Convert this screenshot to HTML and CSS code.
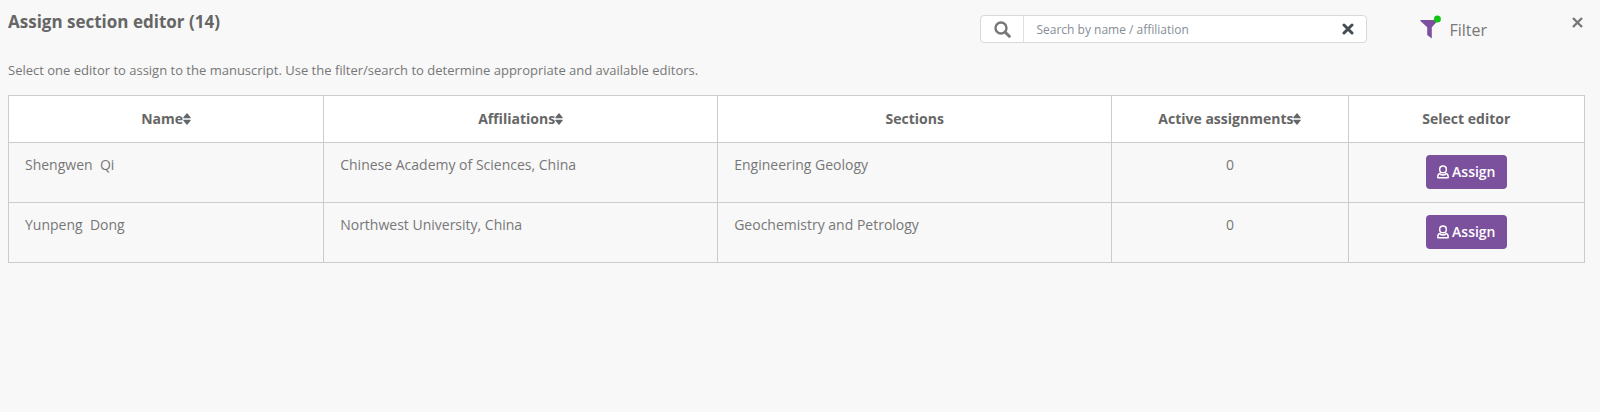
FILE: index.html
```
<!DOCTYPE html>
<html lang="en">

<head>
    <meta charset="UTF-8">
    <meta name="viewport" content="width=device-width, initial-scale=1.0">
    <link rel="stylesheet" href="styles.css">
    <title>Assign section editor</title>
</head>

<body>
    <!-- icons -->
    <svg class="sprite" aria-hidden="true">
        <symbol id="sort" viewBox="0 0 8 12">
            <path d="M0.6 5.2 Q0 5.2 0.3 4.5 L3.5 0.6 Q4 0.1 4.5 0.6 L7.7 4.5 Q8 5.2 7.4 5.2Z M0.6 6.8 Q0 6.8 0.3 7.5 L3.5 11.4 Q4 11.9 4.5 11.4 L7.7 7.5 Q8 6.8 7.4 6.8Z" />
        </symbol>
        <symbol id="user" viewBox="0 0 14 16">
            <g fill="none" stroke="currentColor" stroke-width="1.7" stroke-linejoin="round">
                <circle cx="7" cy="5" r="3.9" />
                <path d="M4.2 9.4C2 9.8 1 11.2 1 13.2V14.8H13V13.2C13 11.2 12 9.8 9.8 9.4" />
                <path d="M3.6 10.6Q7 12.2 10.4 10.6" />
            </g>
        </symbol>
    </svg>

    <header class="header">
        <h1 class="title">Assign section editor (14)</h1>
        <form class="search">
            <button class="search-btn" type="button" aria-label="Search">
                <svg width="17" height="17" viewBox="0 0 17 17">
                    <circle cx="7" cy="7" r="5.5" fill="none" stroke="currentColor" stroke-width="2.4" />
                    <path d="M11.2 11.2L15.3 15.3" stroke="currentColor" stroke-width="3" stroke-linecap="round" />
                </svg>
            </button>
            <input class="search-input" type="text" placeholder="Search by name / affiliation" aria-label="Search by name / affiliation">
            <button class="clear-btn" type="button" aria-label="Clear">
                <svg width="12" height="12" viewBox="0 0 12 12">
                    <path d="M2 2L10 10M10 2L2 10" stroke="currentColor" stroke-width="3" stroke-linecap="round" />
                </svg>
            </button>
        </form>
        <button class="filter" type="button">
            <svg width="21" height="24" viewBox="0 0 21 24">
                <path d="M0.6 5H17.4V6.2L11.8 12.2V23.4L7.2 20V12.2L0.2 5.8Z" fill="#7b519d" />
                <circle cx="17.4" cy="3.9" r="3.5" fill="#14c414" />
            </svg>
            <span>Filter</span>
        </button>
        <button class="close" type="button" aria-label="Close">
            <svg width="11" height="11" viewBox="0 0 11 11">
                <path d="M1 1L10 10M10 1L1 10" stroke="currentColor" stroke-width="2.4" />
            </svg>
        </button>
    </header>

    <p class="desc">Select one editor to assign to the manuscript. Use the filter/search to determine appropriate and available editors.</p>

    <table class="editors">
        <colgroup>
            <col class="col-name">
            <col class="col-wide">
            <col class="col-wide">
            <col class="col-small">
            <col class="col-small">
        </colgroup>
        <thead>
            <tr>
                <th>Name<svg class="sort"><use href="#sort" /></svg></th>
                <th>Affiliations<svg class="sort"><use href="#sort" /></svg></th>
                <th>Sections</th>
                <th>Active assignments<svg class="sort"><use href="#sort" /></svg></th>
                <th>Select editor</th>
            </tr>
        </thead>
        <tbody>
            <tr>
                <td>Shengwen&nbsp; Qi</td>
                <td>Chinese Academy of Sciences, China</td>
                <td>Engineering Geology</td>
                <td class="center">0</td>
                <td class="center"><button class="assign" type="button"><svg class="user"><use href="#user" /></svg>Assign</button></td>
            </tr>
            <tr>
                <td>Yunpeng&nbsp; Dong</td>
                <td>Northwest University, China</td>
                <td>Geochemistry and Petrology</td>
                <td class="center">0</td>
                <td class="center"><button class="assign" type="button"><svg class="user"><use href="#user" /></svg>Assign</button></td>
            </tr>
        </tbody>
    </table>
</body>

</html>
```

FILE: styles.css
```
* {
    box-sizing: border-box;
}

body {
    margin: 0;
    padding: 10px 15px 10px 8px;
    background-color: #f8f8f8;
    color: #777;
    font-family: "Open Sans", sans-serif;
    font-size: 14px;
}

button,
input {
    margin: 0;
    padding: 0;
    border: 0;
    background: none;
    color: inherit;
    font: inherit;
}

button {
    cursor: pointer;
}

svg {
    display: block;
}

.sprite {
    display: none;
}

.header {
    display: flex;
    align-items: flex-start;
    padding-right: 2px;
}

.title {
    flex: 1;
    margin: 0;
    color: #666;
    font-size: 17px;
    line-height: 24px;
}

.search {
    display: flex;
    width: 387px;
    height: 28px;
    margin: 5px 53px 0 0;
    border: 1px solid #d5dade;
    border-radius: 4px;
    background-color: #fff;
}

.search-btn {
    display: flex;
    align-items: center;
    justify-content: center;
    width: 43px;
    border-right: 1px solid #dcdfe3;
}

.search-input {
    flex: 1;
    min-width: 0;
    padding: 0 12px;
    font-size: 12px;
    outline: none;
}

.search-input::placeholder {
    color: #868e96;
    opacity: 1;
}

.clear-btn {
    display: flex;
    align-items: center;
    justify-content: center;
    width: 37px;
    color: #444c54;
}

.filter {
    display: flex;
    gap: 8px;
    margin: 5px 85px 0 0;
    font-size: 16px;
    line-height: 30px;
}

.close {
    margin-top: 7px;
}

.desc {
    margin: 15px 0;
    font-size: 13px;
    line-height: 20px;
}

.editors {
    width: 100%;
    table-layout: fixed;
    border-collapse: collapse;
    line-height: 20px;
}

.col-name {
    width: 20%;
}

.col-wide {
    width: 25%;
}

.col-small {
    width: 15%;
}

.editors th,
.editors td {
    border: 1px solid #ccc;
    vertical-align: top;
}

.editors th {
    padding: 13px 16px;
    background-color: #fff;
    color: #666;
    text-align: center;
}

.editors td {
    padding: 12px 16px 13px;
    text-align: left;
}

.editors .center {
    text-align: center;
}

.sort {
    display: inline-block;
    width: 8px;
    height: 12px;
    fill: currentColor;
    vertical-align: -1px;
}

.assign {
    display: inline-flex;
    align-items: center;
    gap: 3px;
    height: 34px;
    padding: 0 11px;
    border-radius: 4px;
    background-color: #7b519d;
    color: #fff;
    font-weight: 600;
    vertical-align: top;
}

.user {
    width: 12px;
    height: 14px;
}
```
